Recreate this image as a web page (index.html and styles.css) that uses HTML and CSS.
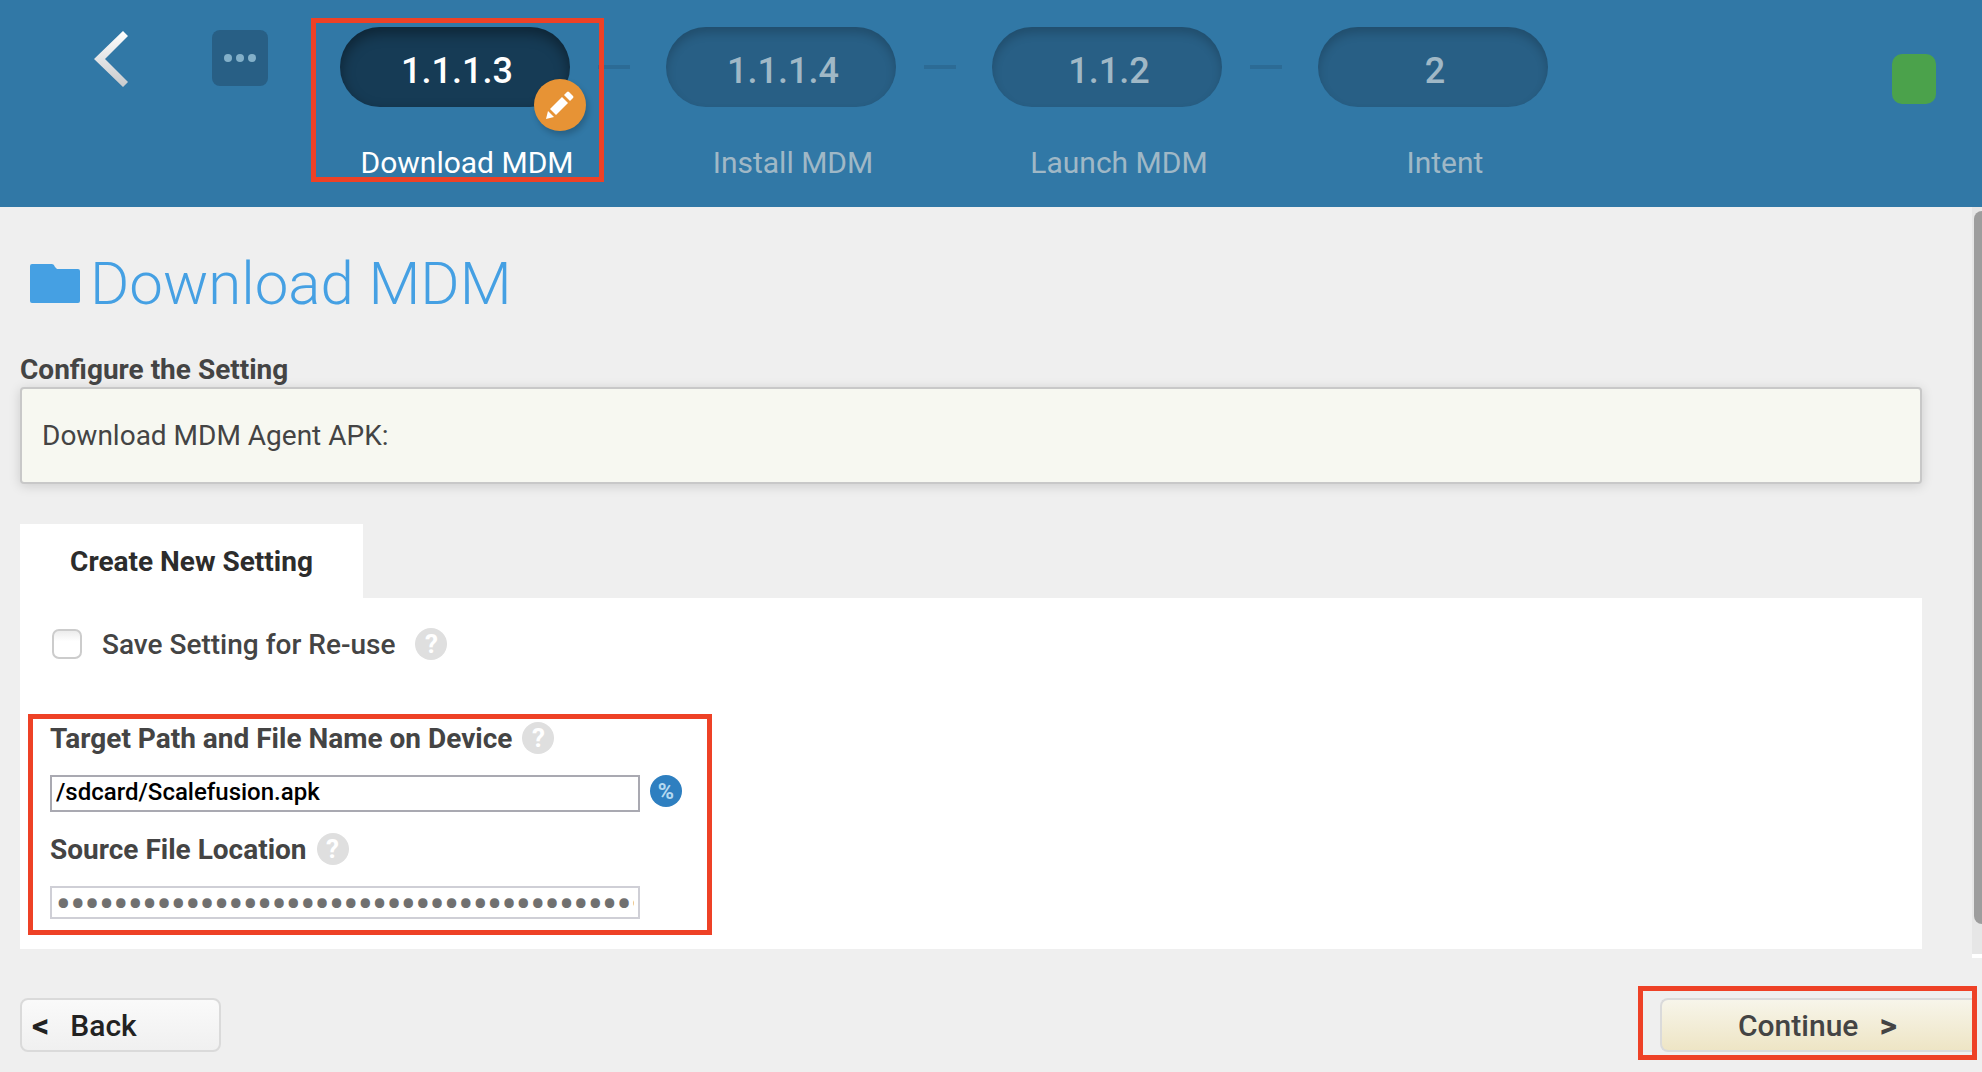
FILE: index.html
```html
<!DOCTYPE html>
<html lang="en">
<head>
    <meta charset="UTF-8">
    <meta name="viewport" content="width=device-width, initial-scale=1.0">
    <title>Download MDM</title>
    <link rel="stylesheet" href="styles.css">
</head>
<body>
    <header class="wizard-header">
        <button type="button" class="prev-btn" aria-label="Previous">
            <svg width="34" height="56" viewBox="0 0 34 56">
                <defs>
                    <linearGradient id="arrow-fill" x1="0" y1="0" x2="0" y2="1">
                        <stop offset="0" stop-color="#ffffff"/>
                        <stop offset="1" stop-color="#c8cacc"/>
                    </linearGradient>
                </defs>
                <path d="M29 0 L34 5 L11 28 L34 51 L29 56 L0 28 Z" fill="url(#arrow-fill)"/>
            </svg>
        </button>
        <button type="button" class="more-btn" aria-label="More steps">
            <svg width="56" height="56" viewBox="0 0 56 56" fill="#83b0c9">
                <circle cx="16" cy="28" r="4"/>
                <circle cx="28" cy="28" r="4"/>
                <circle cx="40" cy="28" r="4"/>
            </svg>
        </button>
        <ol class="steps">
            <li class="step active">
                <div class="step-row">
                    <a href="#" class="pill">1.1.1.3</a>
                    <span class="dash"></span>
                    <span class="edit-badge">
                        <svg width="52" height="52" viewBox="0 0 52 52" fill="#fff">
                            <path d="M12 40 L14 32 L20 38 Z"/>
                            <path d="M16 30 L28 18 L34 24 L22 36 Z"/>
                            <path d="M30 16 L33 13 Q34 12 35 13 L39 17 Q40 18 39 19 L36 22 Z"/>
                        </svg>
                    </span>
                </div>
                <div class="step-label">Download MDM</div>
                <div class="mark mark-step"></div>
            </li>
            <li class="step">
                <div class="step-row">
                    <a href="#" class="pill">1.1.1.4</a>
                    <span class="dash"></span>
                </div>
                <div class="step-label">Install MDM</div>
            </li>
            <li class="step">
                <div class="step-row">
                    <a href="#" class="pill">1.1.2</a>
                    <span class="dash"></span>
                </div>
                <div class="step-label">Launch MDM</div>
            </li>
            <li class="step">
                <div class="step-row">
                    <a href="#" class="pill">2</a>
                </div>
                <div class="step-label">Intent</div>
            </li>
        </ol>
        <span class="status"></span>
    </header>

    <div class="body-row">
        <main class="content">
            <h1 class="page-title">
                <svg width="50" height="40" viewBox="0 0 50 40">
                    <path d="M0 2 Q0 0 2 0 H22 Q24 0 25 3 L27 5 H48 Q50 5 50 7 V37 Q50 39 48 39 H2 Q0 39 0 37 Z" fill="#45a0e3"/>
                </svg>
                <span>Download MDM</span>
            </h1>

            <h2 class="section-title">Configure the Setting</h2>
            <div class="description">Download MDM Agent APK:</div>

            <div class="tab">Create New Setting</div>
            <form class="panel">
                <div class="save-row">
                    <input type="checkbox" id="save-setting" class="checkbox">
                    <label for="save-setting" class="save-label">Save Setting for Re-use</label>
                    <span class="help">?</span>
                </div>
                <div class="fields">
                    <div class="field-head">
                        <label for="target-path">Target Path and File Name on Device</label>
                        <span class="help">?</span>
                    </div>
                    <div class="field-row">
                        <input type="text" id="target-path" class="text-input" value="/sdcard/Scalefusion.apk">
                        <button type="button" class="variable-btn" aria-label="Insert variable">%</button>
                    </div>
                    <div class="field-head">
                        <label for="source-file">Source File Location</label>
                        <span class="help">?</span>
                    </div>
                    <input type="password" id="source-file" class="text-input masked" value="012345678901234567890123456789012345678901234567">
                </div>
            </form>
        </main>
        <div class="scroll-track">
            <div class="scroll-thumb"></div>
        </div>
    </div>

    <footer class="actions">
        <button type="button" class="btn back-btn"><span class="chevron">&lt;</span><span>Back</span></button>
        <div class="mark-continue">
            <button type="submit" class="btn continue-btn"><span>Continue</span><span class="chevron">&gt;</span></button>
        </div>
    </footer>
</body>
</html>
```
FILE: styles.css
```css
* {
    box-sizing: border-box;
}
body {
    margin: 0;
    min-height: 100vh;
    background-color: #efefef;
    color: #444;
    font-family: Roboto, Arial, sans-serif;
    font-size: 28px;
    overflow: hidden;
}
button {
    font-family: inherit;
    border: none;
    padding: 0;
    cursor: pointer;
}

/* Wizard header */
.wizard-header {
    display: flex;
    align-items: flex-start;
    height: 207px;
    padding: 27px 46px 0 94px;
    background-color: #3178a6;
}
.prev-btn {
    height: 56px;
    margin: 4px 84px 0 0;
    background: none;
}
.prev-btn svg,
.more-btn svg,
.edit-badge svg {
    display: block;
}
.more-btn {
    margin: 3px 72px 0 0;
    border-radius: 8px;
    background-color: #285f85;
}
.steps {
    display: flex;
    margin: 0;
    padding: 0;
    list-style: none;
}
.step {
    position: relative;
    width: 326px;
    color: #a0b8c6;
}
.step-row {
    position: relative;
    display: flex;
    align-items: center;
    gap: 28px;
}
.pill {
    width: 230px;
    height: 80px;
    padding: 6px 0 0 4px;
    border-radius: 40px;
    background-color: #285f85;
    box-shadow: inset 0 6px 10px rgba(0, 0, 0, 0.18);
    color: inherit;
    font-size: 36px;
    font-weight: 500;
    line-height: 76px;
    text-align: center;
    text-decoration: none;
}
.dash {
    width: 32px;
    height: 4px;
    background-color: #2c6b95;
}
.step-label {
    width: 254px;
    margin-top: 38px;
    font-size: 30px;
    line-height: 36px;
    text-align: center;
}
.active {
    color: #fff;
}
.active .pill {
    background-color: #163b55;
    box-shadow: inset 0 6px 14px rgba(0, 0, 0, 0.4);
}
.edit-badge {
    position: absolute;
    top: 52px;
    left: 194px;
    border-radius: 50%;
    background-color: #e79335;
    box-shadow: 2px 4px 6px rgba(0, 0, 0, 0.2);
}
.mark {
    position: absolute;
    border: 5px solid #ee4126;
}
.mark-step {
    top: -9px;
    left: -29px;
    width: 293px;
    height: 164px;
}
.status {
    width: 44px;
    height: 50px;
    margin: 27px 0 0 auto;
    border-radius: 10px;
    background-color: #4ba24b;
}

/* Scrolling area */
.body-row {
    display: flex;
    height: 751px;
}
.content {
    flex: 1;
    padding: 39px 50px 0 20px;
}
.page-title {
    display: flex;
    align-items: center;
    gap: 10px;
    margin: 0;
    padding-left: 10px;
    color: #45a0e3;
    font-size: 60px;
    font-weight: 300;
    line-height: 76px;
}
.section-title {
    margin: 31px 0 0;
    font-size: 28px;
    font-weight: 700;
    line-height: 34px;
}
.description {
    height: 97px;
    padding-left: 20px;
    border: 2px solid #c8c8c8;
    border-radius: 4px;
    background-color: #f7f8f1;
    box-shadow: 0 2px 12px rgba(0, 0, 0, 0.15);
    line-height: 93px;
}
.tab {
    width: 343px;
    height: 74px;
    margin-top: 40px;
    background-color: #fff;
    color: #2c2c2c;
    font-weight: 700;
    line-height: 76px;
    text-align: center;
}
.panel {
    height: 351px;
    padding: 30px 8px 0;
    background-color: #fff;
}
.save-row {
    display: flex;
    align-items: center;
    height: 32px;
    padding-left: 24px;
}
.checkbox {
    appearance: none;
    width: 30px;
    height: 30px;
    margin: 0 20px 0 0;
    border: 2px solid #ccc;
    border-radius: 7px;
    background: linear-gradient(#ececec, #fff 40%);
}
.save-label {
    margin-right: 20px;
    font-weight: 500;
}
.help {
    width: 32px;
    height: 32px;
    border-radius: 50%;
    background-color: #dfdfdf;
    color: #fff;
    font-size: 26px;
    font-weight: 700;
    line-height: 32px;
    text-align: center;
}
.fields {
    width: 684px;
    height: 221px;
    margin-top: 54px;
    padding: 3px 17px 0;
    border: 5px solid #ee4126;
}
.field-head {
    display: flex;
    align-items: center;
    gap: 10px;
    height: 32px;
    font-weight: 700;
}
.field-row {
    display: flex;
    gap: 10px;
    margin: 21px 0;
}
.text-input {
    width: 590px;
    height: 37px;
    padding: 0 4px 4px;
    border: 2px solid #a9a9b1;
    background-color: #fff;
    color: #000;
    font-family: inherit;
    font-size: 24px;
    font-weight: 500;
}
.masked {
    display: block;
    height: 33px;
    margin-top: 21px;
    padding: 3px 4px 0;
    border-color: #cfcfd6;
    color: #707070;
    font-size: 40px;
    font-weight: 700;
}
.variable-btn {
    width: 32px;
    height: 32px;
    border-radius: 50%;
    background-color: #2e7fc0;
    color: #b5d9f0;
    font-size: 22px;
    font-weight: 700;
}
.scroll-track {
    width: 10px;
    padding: 4px 0 0 2px;
    background: linear-gradient(#e6e6e6, #e6e6e6) no-repeat 0 0 / 10px 747px, #fff;
}
.scroll-thumb {
    height: 713px;
    border-radius: 10px 0 0 10px;
    background-color: #9d9d9d;
}

/* Bottom bar */
.actions {
    display: flex;
    align-items: flex-start;
    justify-content: space-between;
    padding: 28px 5px 0 20px;
}
.btn {
    display: flex;
    align-items: center;
    height: 54px;
    border: 2px solid #dadada;
    border-radius: 8px;
    font-size: 30px;
    font-weight: 500;
}
.chevron {
    font-size: 34px;
    font-weight: 700;
}
.back-btn {
    gap: 21px;
    width: 201px;
    margin-top: 12px;
    padding-left: 10px;
    background: linear-gradient(#fafafa, #f0f0f0);
    color: #222;
}
.mark-continue {
    height: 74px;
    padding: 7px 0 0 17px;
    border: 5px solid #ee4126;
}
.continue-btn {
    gap: 21px;
    width: 312px;
    padding-left: 76px;
    border-right: none;
    border-radius: 8px 0 0 8px;
    background: linear-gradient(#f7f5ea, #eee5c5);
    color: #444;
}
```
